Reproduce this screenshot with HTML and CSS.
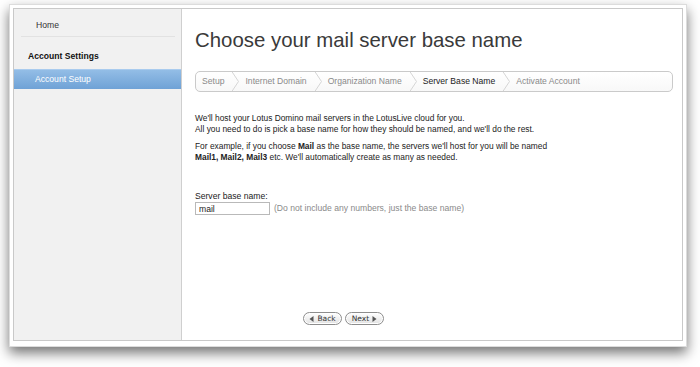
FILE: index.html
```html
<!DOCTYPE html>
<html lang="en">
    <head>
        <meta charset="UTF-8" />
        <title>Account Setup</title>
        <link rel="stylesheet" href="styles.css">
    </head>
    <body>
        <div class="window">
            <div class="frame">
                <div class="sidebar">
                    <div class="nav-home">Home</div>
                    <div class="nav-title">Account Settings</div>
                    <div class="nav-item active">Account Setup</div>
                </div>

                <div class="main">
                    <h1>Choose your mail server base name</h1>

                    <div class="steps">
                        <span class="step">Setup</span>
                        <svg class="chev" width="8" height="21" viewBox="0 0 8 21"><polyline points="0.5,0 7.5,10.5 0.5,21" fill="none" stroke="#d6d6d6" stroke-width="1"/></svg>
                        <span class="step">Internet Domain</span>
                        <svg class="chev" width="8" height="21" viewBox="0 0 8 21"><polyline points="0.5,0 7.5,10.5 0.5,21" fill="none" stroke="#d6d6d6" stroke-width="1"/></svg>
                        <span class="step">Organization Name</span>
                        <svg class="chev" width="8" height="21" viewBox="0 0 8 21"><polyline points="0.5,0 7.5,10.5 0.5,21" fill="none" stroke="#d6d6d6" stroke-width="1"/></svg>
                        <span class="step current">Server Base Name</span>
                        <svg class="chev" width="8" height="21" viewBox="0 0 8 21"><polyline points="0.5,0 7.5,10.5 0.5,21" fill="none" stroke="#d6d6d6" stroke-width="1"/></svg>
                        <span class="step">Activate Account</span>
                    </div>

                    <p class="intro">
                        We'll host your Lotus Domino mail servers in the LotusLive cloud for you.<br>
                        All you need to do is pick a base name for how they should be named, and we'll do the rest.
                    </p>
                    <p class="intro second">
                        For example, if you choose <b>Mail</b> as the base name, the servers we'll host for you will be named<br>
                        <b>Mail1, Mail2, Mail3</b> etc. We'll automatically create as many as needed.
                    </p>

                    <label class="field-label" for="baseName">Server base name:</label>
                    <div class="field-row">
                        <input type="text" id="baseName" value="mail" />
                        <span class="hint">(Do not include any numbers, just the base name)</span>
                    </div>

                    <div class="buttons">
                        <button class="pill">
                            <svg width="5" height="6" viewBox="0 0 5 6"><polygon points="4.5,0 0.5,3 4.5,6" fill="#555"/></svg>
                            Back
                        </button>
                        <button class="pill">
                            Next
                            <svg width="5" height="6" viewBox="0 0 5 6"><polygon points="0.5,0 4.5,3 0.5,6" fill="#555"/></svg>
                        </button>
                    </div>
                </div>
            </div>
        </div>
    </body>
</html>
```

FILE: styles.css
```css
* {
    margin: 0;
    padding: 0;
    box-sizing: border-box;
}
html,
body {
    height: 100%;
}
body {
    font-family: "Liberation Sans", Arial, sans-serif;
    font-size: 8.6px;
    line-height: 11px;
    color: #222;
    background: #fff;
    padding-top: 4px;
}

.window {
    width: 678px;
    height: 343px;
    margin-left: 9px;
    padding: 4px;
    background: #fff;
    border: 1px solid #dcdcdc;
    box-shadow: 0 6px 12px rgba(0, 0, 0, 0.55);
}
.frame {
    display: flex;
    height: 100%;
    margin: -1px;
    border: 1px solid #c9c9c9;
}

/* left navigation */
.sidebar {
    width: 168px;
    flex-shrink: 0;
    background: #f1f1f1;
    border-right: 1px solid #cfcfcf;
}
.nav-home {
    margin: 0 6px 0 7px;
    padding: 11px 0 5px 15px;
    color: #333;
    border-bottom: 1px solid #e2e2e2;
}
.nav-title {
    margin-top: 14px;
    padding-left: 14px;
    font-weight: bold;
    color: #111;
}
.nav-item {
    margin-top: 7px;
    padding: 4px 0 5px 21px;
    height: 20px;
    color: #333;
}
.nav-item.active {
    color: #fff;
    background: linear-gradient(#93bde6, #6fa2d6);
    border-top: 1px solid #a9cbee;
}

/* main panel */
.main {
    flex: 1;
    padding: 19px 9px 0 13px;
    background: #fff;
}
h1 {
    font-size: 20.4px;
    line-height: 24px;
    font-weight: normal;
    color: #3a3a3a;
}

.steps {
    display: flex;
    align-items: center;
    height: 21px;
    margin-top: 19px;
    padding-left: 6px;
    border: 1px solid #cacaca;
    border-radius: 5px;
    background: linear-gradient(#fff, #f8f8f8);
    overflow: hidden;
}
.step {
    color: #8a8a8a;
}
.step.current {
    color: #222;
}
.chev {
    display: block;
    margin: 0 6px 0 7px;
}

.intro {
    margin-top: 21px;
    font-size: 8.4px;
}
.intro.second {
    margin-top: 6px;
}

.field-label {
    display: block;
    margin-top: 28px;
}
.field-row {
    display: flex;
    align-items: center;
    gap: 4px;
}
.field-row input {
    width: 75px;
    height: 13px;
    padding: 0 3px;
    font-family: "Liberation Sans", Arial, sans-serif;
    font-size: 8.6px;
    color: #222;
    border: 1px solid #b9b9b9;
    outline: none;
}
.hint {
    color: #8a8a8a;
}

.buttons {
    display: flex;
    gap: 3px;
    margin-top: 97px;
    padding-left: 108px;
}
.pill {
    display: flex;
    align-items: center;
    justify-content: center;
    gap: 3px;
    width: 39px;
    height: 13px;
    font-family: "DejaVu Sans", sans-serif;
    font-size: 7.5px;
    color: #333;
    border: 1px solid #8d8d8d;
    border-radius: 7px;
    background: linear-gradient(#fff, #e2e2e2);
    box-shadow: inset 0 0 0 1px #fff;
}
```
